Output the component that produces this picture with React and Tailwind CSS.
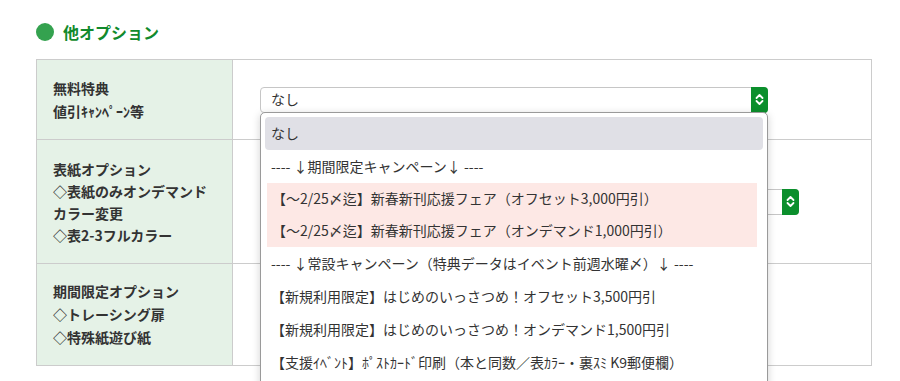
const OPTIONS = [
  { label: "なし", kind: "active" },
  { label: "---- ↓期間限定キャンペーン↓ ----", kind: "plain" },
  { label: "【〜2/25〆迄】新春新刊応援フェア（オフセット3,000円引）", kind: "sale" },
  { label: "【〜2/25〆迄】新春新刊応援フェア（オンデマンド1,000円引）", kind: "sale" },
  { label: "---- ↓常設キャンペーン（特典データはイベント前週水曜〆）↓ ----", kind: "plain" },
  { label: "【新規利用限定】はじめのいっさつめ！オフセット3,500円引", kind: "plain" },
  { label: "【新規利用限定】はじめのいっさつめ！オンデマンド1,500円引", kind: "plain" },
  { label: "【支援ｲﾍﾞﾝﾄ】ﾎﾟｽﾄｶｰﾄﾞ印刷（本と同数／表ｶﾗｰ・裏ｽﾐ K9郵便欄）", kind: "plain" },
];

function Chevrons() {
  return (
    <svg width="9" height="13" viewBox="0 0 9 13" fill="none">
      <path d="M1.5 5 L4.5 2 L7.5 5" stroke="white" strokeWidth="1.8" strokeLinecap="round" strokeLinejoin="round" />
      <path d="M1.5 8 L4.5 11 L7.5 8" stroke="white" strokeWidth="1.8" strokeLinecap="round" strokeLinejoin="round" />
    </svg>
  );
}

function SelectBox({ value, width }) {
  return (
    <div className={`flex h-[26px] ${width} items-stretch rounded-[4px] border border-[#c6c6c6] bg-white`}>
      <span className="flex flex-1 items-center pl-[10px] text-[14px] text-[#333]">{value}</span>
      <span className="-my-px -mr-px flex w-[17px] items-center justify-center rounded-r-[4px] bg-[#0b8f2c]">
        <Chevrons />
      </span>
    </div>
  );
}

function Dropdown() {
  return (
    <div className="absolute left-0 top-[25px] z-10 h-[300px] w-[508px] overflow-hidden rounded-t-[5px] border border-[#9a9a9a] bg-white px-[4px] pt-[4px] shadow-[0_2px_8px_rgba(0,0,0,0.18)]">
      {OPTIONS.map((opt, i) => (
        <div
          key={i}
          className={
            opt.kind === "active"
              ? "flex h-[33px] items-center rounded-[4px] bg-[#e0e0e6] px-[6px] text-[14px] whitespace-nowrap text-[#333]"
              : opt.kind === "sale"
              ? "mx-[2px] mr-[6px] flex h-[32px] items-center bg-[#fde8e5] px-[5px] text-[14px] whitespace-nowrap text-[#333]"
              : "flex h-[33px] items-center px-[6px] text-[14px] whitespace-nowrap text-[#333]"
          }
        >
          {opt.label}
        </div>
      ))}
    </div>
  );
}

export default function App() {
  return (
    <div
      className="h-[381px] w-[900px] overflow-hidden bg-white pl-[36px] pr-[28px] pt-[23px]"
      style={{ fontFamily: '"Noto Sans CJK JP", "Noto Sans", sans-serif' }}
    >
      <div className="flex h-[18px] items-center gap-[9px]">
        <span className="h-[18px] w-[18px] rounded-full bg-[#34a24f]" />
        <h2 className="text-[16px] font-bold text-[#118a2c]">他オプション</h2>
      </div>

      <div className="mt-[18px] border border-[#cccccc]">
        <div className="grid grid-cols-[196px_1fr] border-b border-[#cccccc]">
          <div className="flex h-[79px] flex-col justify-center border-r border-[#cccccc] bg-[#e5f2e7] pl-[16px] text-[14px] font-bold leading-[23px] text-[#333]">
            <p>無料特典</p>
            <p>値引ｷｬﾝﾍﾟｰﾝ等</p>
          </div>
          <div className="flex items-center pl-[27px]">
            <div className="relative">
              <SelectBox value="なし" width="w-[508px]" />
              <Dropdown />
            </div>
          </div>
        </div>

        <div className="grid grid-cols-[196px_1fr] border-b border-[#cccccc]">
          <div className="flex h-[123px] flex-col justify-center border-r border-[#cccccc] bg-[#e5f2e7] pl-[16px] text-[14px] font-bold leading-[22px] text-[#333]">
            <p>表紙オプション</p>
            <p>◇表紙のみオンデマンド</p>
            <p>カラー変更</p>
            <p>◇表2-3フルカラー</p>
          </div>
          <div className="flex items-center pl-[27px]">
            <SelectBox value="" width="w-[539px]" />
          </div>
        </div>

        <div className="grid grid-cols-[196px_1fr]">
          <div className="flex h-[101px] flex-col justify-center border-r border-[#cccccc] bg-[#e5f2e7] pl-[16px] text-[14px] font-bold leading-[23px] text-[#333]">
            <p>期間限定オプション</p>
            <p>◇トレーシング扉</p>
            <p>◇特殊紙遊び紙</p>
          </div>
          <div />
        </div>
      </div>
    </div>
  );
}
